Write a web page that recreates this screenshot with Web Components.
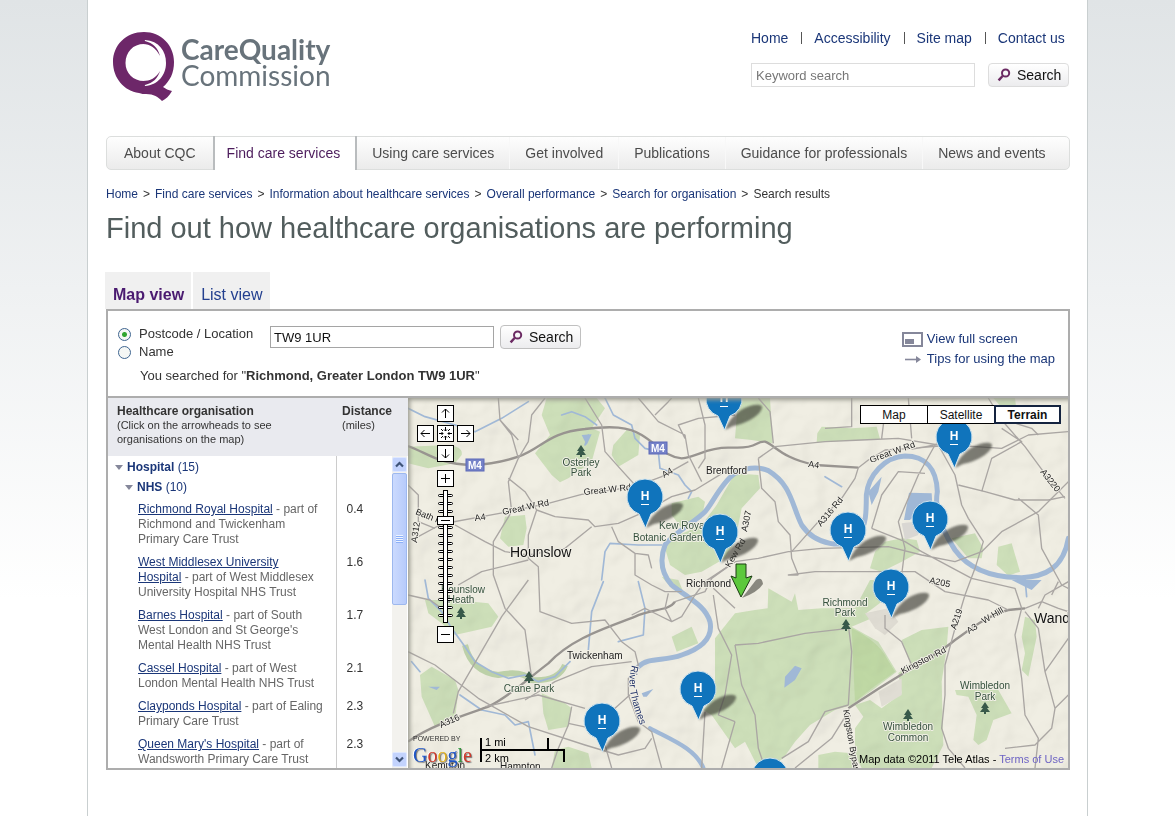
<!DOCTYPE html>
<html lang="en">
<head>
<meta charset="utf-8">
<title>Find out how healthcare organisations are performing - Care Quality Commission</title>
<style>
  html { background: #fff linear-gradient(#e0e4e6, #fff 600px) no-repeat; min-height: 100%; }
  body { margin: 0; font: 13px/16px "Liberation Sans", Arial, sans-serif; color: #333; }
</style>
</head>
<body>
<care-page>
  <site-header></site-header>
  <site-nav></site-nav>
  <bread-crumb></bread-crumb>
  <page-title>Find out how healthcare organisations are performing</page-title>
  <view-tabs></view-tabs>
  <results-panel>
    <location-search slot="search"></location-search>
    <org-list slot="list"></org-list>
    <terrain-map slot="map"></terrain-map>
  </results-panel>
</care-page>

<script>
const define = (name, html, after) => {
  const t = document.createElement('template');
  t.innerHTML = '<style>*{box-sizing:border-box}a{color:#1a3678;text-decoration:none}button,input{font:inherit;margin:0}ul,ol{list-style:none;margin:0;padding:0}</style>' + html;
  customElements.define(name, class extends HTMLElement {
    constructor() {
      super();
      this.attachShadow({ mode: 'open' }).append(t.content.cloneNode(true));
      if (after) after(this.shadowRoot, this);
    }
  });
};

define('search-button', `
<style>
  :host { display: block; }
  button { display: flex; align-items: center; gap: 6px; height: 24px; width: 81px; padding: 0 8px; font-size: 14px; color: #111;
    border: 1px solid var(--edge, #ddd); border-radius: 4px; background: linear-gradient(#fff, #ececee); }
  svg { flex: none; }
</style>
<button type="submit"><svg width="14" height="14" viewBox="0 0 14 14" fill="none" stroke="#6b2a63"><circle cx="8.6" cy="5" r="3.6" stroke-width="2"/><path d="M5.6 8 L1.6 12.4" stroke-width="2.4"/></svg>Search</button>`);

define('care-page', `
<style>
  :host { display: block; max-width: 1001px; min-height: 816px; margin: 0 auto; padding: 0 17px 0 18px; box-sizing: border-box;
    background: #fff; border: solid #c9cfd0; border-width: 0 1px; }
</style>
<slot></slot>`);

define('site-header', `
<style>
  :host { display: flex; justify-content: space-between; padding: 30px 1px 0 6px; min-height: 136px; box-sizing: border-box; }
  nav ul { display: flex; font-size: 14px; line-height: 16px; }
  li + li::before { content: ""; display: inline-block; width: 1px; height: 12px; background: #555; margin: 0 12px 0 13px; vertical-align: -1px; }
  form { display: flex; gap: 13px; margin-top: 17px; }
  input { width: 224px; height: 24px; padding: 0 4px; border: 1px solid #ddd; font-size: 13px; background: #fff; }
  input::placeholder { color: #777; opacity: 1; }
  text { font-family: Lato, sans-serif; font-size: 28px; fill: #68737b; }
</style>
<a href="#" aria-label="Care Quality Commission home"><svg width="222" height="74" viewBox="0 0 222 74">
  <path fill="#6d2769" d="M32 2C49 2 62 15 62 32C62 43 58 51 51 57C54 59 56 60 60 61C57 66 54 69 50 71C46 67 42 64 34 64C31 64 30 64 27 63C12 61 1 48 1 32C1 15 14 2 32 2Z"/>
  <path fill="#fff" d="M32 14C21 14 13.500 22 13.500 33C13.500 43 21 51 32 51L33 56C46 55 54 45 54 33C54 21 47 11 33 10Z"/>
  <path fill="#6d2769" d="M26 11L33 11C41 13 46 18 48 26C44 18 38 14 31 14ZM26 54L33 55C41 53 46 48 48 41C44 48 38 51 31 51Z"/>
  <text x="69" y="30" font-weight="700">CareQuality</text>
  <text x="69" y="56">Commission</text>
</svg></a>
<div>
  <nav aria-label="Site"><ul><li><a href="#">Home</a></li><li><a href="#">Accessibility</a></li><li><a href="#">Site map</a></li><li><a href="#">Contact us</a></li></ul></nav>
  <form onsubmit="return false"><input type="text" aria-label="Keyword search" placeholder="Keyword search"><search-button></search-button></form>
</div>`);

define('site-nav', `
<style>
  :host { display: block; }
  ul { display: flex; height: 34px; border: 1px solid #dcdedd; border-radius: 5px; background: linear-gradient(#fefefe, #ebebeb); font-size: 14px; line-height: 32px; }
  a { display: block; padding: 0 15px; color: #4c4c4c; }
  li + li { border-left: 1px solid #f8f8f8; }
  li:first-child a { padding: 0 17px; }
  li.on { border: solid #b9bcbe; border-width: 0 2px; background: #fff; height: 34px; margin: -1px 0; box-shadow: inset 0 1px #dcdedd; line-height: 34px; }
  li.on + li { border-left: 0; }
  li.on a { padding: 0 15px 0 12px; color: #4c1c5c; }
</style>
<nav aria-label="Main"><ul><li><a href="#">About CQC</a></li><li class="on"><a href="#">Find care services</a></li><li><a href="#">Using care services</a></li><li><a href="#">Get involved</a></li><li><a href="#">Publications</a></li><li><a href="#">Guidance for professionals</a></li><li><a href="#">News and events</a></li></ul></nav>`);

define('bread-crumb', `
<style>
  :host { display: block; padding-top: 16px; font-size: 12px; line-height: 16px; }
  ol { display: flex; flex-wrap: wrap; }
  li + li::before { content: ">"; margin: 0 5px; }
</style>
<nav aria-label="Breadcrumb"><ol><li><a href="#">Home</a></li><li><a href="#">Find care services</a></li><li><a href="#">Information about healthcare services</a></li><li><a href="#">Overall performance</a></li><li><a href="#">Search for organisation</a></li><li>Search results</li></ol></nav>`);

define('page-title', `
<style>
  :host { display: block; }
  h1 { margin: 8px 0 26px; font-size: 29px; line-height: 36px; font-weight: 400; color: #525d5d; }
</style>
<h1><slot></slot></h1>`);

define('view-tabs', `
<style>
  :host { display: block; margin-left: -1px; }
  ul { display: flex; gap: 2px; font-size: 16px; line-height: 45px; height: 37px; }
  a { display: block; height: 37px; padding: 0 7px 0 8px; background: #f0f0f0; color: #24408f; }
  a.on { color: #4a1a70; font-weight: 700; }
</style>
<ul><li><a class="on" href="#">Map view</a></li><li><a href="#">List view</a></li></ul>`);

define('results-panel', `
<style>
  :host { display: block; border: 2px solid #adadad; }
  .split { display: grid; grid-template-columns: 300px minmax(0, 1fr); height: 372px; border-top: 2px solid #adadad; }
</style>
<slot name="search"></slot>
<div class="split"><slot name="list"></slot><slot name="map"></slot></div>`);

define('location-search', `
<style>
  :host { display: flex; justify-content: space-between; height: 85px; padding: 14px 13px 0 10px; box-sizing: border-box; font-size: 13px; }
  form { display: grid; grid-template-columns: 146px 224px 81px; column-gap: 6px; align-content: start; }
  fieldset { border: 0; margin: 0; padding: 0; }
  label { display: flex; align-items: center; gap: 8px; height: 18px; line-height: 18px; white-space: nowrap; }
  [type=radio] { appearance: none; width: 13px; height: 13px; border: 1px solid #3f6590; border-radius: 50%; background: #f5f7f5; }
  [type=radio]:checked { background: radial-gradient(circle, #2fa52f 0 2px, #f5f7f5 3px); }
  [type=text] { height: 22px; align-self: start; margin-top: 1px; padding: 0 3px; border: 1px solid #a5a5a5; color: #111; }
  search-button { --edge: #c0c0c0; }
  p { grid-column: 1 / -1; margin: 7px 0 0; padding-left: 22px; line-height: 16px; }
  li { display: flex; align-items: center; gap: 4px; height: 20px; }
  ul { padding-top: 4px; }
</style>
<form onsubmit="return false">
  <fieldset aria-label="Search by">
    <label><input type="radio" name="by" checked>Postcode / Location</label>
    <label><input type="radio" name="by">Name</label>
  </fieldset>
  <input type="text" aria-label="Postcode or location" value="TW9 1UR">
  <search-button></search-button>
  <p>You searched for "<b>Richmond, Greater London TW9 1UR</b>"</p>
</form>
<ul>
  <li><svg width="21" height="15" viewBox="0 0 21 15"><path d="M1 1H20V14H1Z" fill="#fff" stroke="#85879a" stroke-width="2"/><path d="M3 7H12V12H3Z" fill="#85879a"/></svg><a href="#">View full screen</a></li>
  <li><svg width="21" height="15" viewBox="0 0 21 15"><path d="M3 7.500H16" stroke="#85879a" stroke-width="1.600"/><path d="M14 4L19 7.500L14 11Z" fill="#85879a"/></svg><a href="#">Tips for using the map</a></li>
</ul>`);

define('org-list', `
<style>
  :host { display: block; position: relative; overflow: hidden; min-height: 0; background: #fff; font-size: 12px; line-height: 15px; }
  table { width: 100%; table-layout: fixed; border-collapse: collapse; }
  th { text-align: left; vertical-align: top; font-weight: 400; }
  thead th { height: 58px; padding: 6px 0 0 9px; background: #e9eaef; font-size: 11px; line-height: 14px; }
  thead th + th { padding-left: 6px; }
  thead b { display: block; font-size: 12px; }
  tbody th { border-right: 1px solid #ccc; color: #666; padding: 5px 12px 3px 30px; }
  td { vertical-align: top; padding: 5px 0 3px 10px; color: #333; }
  tbody th a { text-decoration: underline; }
  tbody .g { height: 20px; padding: 0 0 0 7px; }
  tbody .g.n { padding-left: 17px; }
  .g button { display: flex; align-items: center; gap: 4px; border: 0; background: none; padding: 0; height: 20px; color: #1a3678; }
  tr.first .g { padding-top: 1px; height: 21px; }
  .g i { border: solid transparent; border-width: 5px 4px 0; border-top-color: #85879a; }
  .bar { position: absolute; right: 1px; top: 58px; bottom: 0; width: 15px; display: flex; flex-direction: column; gap: 1px; padding: 1px 0; background: #f3f2ee; }
  .bar button { height: 15px; padding: 0; border: 1px solid #dfe8ff; border-radius: 2px; background: #c3d3fd; line-height: 0; }
  .thumb { height: 132px; border: 1px solid #9db8ee; border-radius: 2px; background: linear-gradient(90deg, #cbdafe, #b7cbfb); display: grid; place-items: center; }
  .thumb::before { content: ""; width: 7px; height: 8px; background: repeating-linear-gradient(#eef4ff 0 1px, #8cb0f8 1px 2px); }
  .space { flex: 1; }
</style>
<table>
  <colgroup><col style="width:228px"><col></colgroup>
  <thead><tr><th scope="col"><b>Healthcare organisation</b>(Click on the arrowheads to see<br>organisations on the map)</th><th scope="col"><b>Distance</b>(miles)</th></tr></thead>
  <tbody>
    <tr class="first"><th class="g"><button><i></i><span><b>Hospital</b> (15)</span></button></th><td></td></tr>
    <tr><th class="g n"><button><i></i><span><b>NHS</b> (10)</span></button></th><td></td></tr>
  </tbody>
</table>
<div class="bar"><button aria-label="Scroll up"><svg width="13" height="13"><path d="M3 8.500L6.500 5L10 8.500" fill="none" stroke="#3f5479" stroke-width="2.200"/></svg></button><div class="thumb"></div><div class="space"></div><button aria-label="Scroll down"><svg width="13" height="13"><path d="M3 4.500L6.500 8L10 4.500" fill="none" stroke="#3f5479" stroke-width="2.200"/></svg></button></div>`,
root => {
  const body = root.querySelector('tbody');
  [['Richmond Royal Hospital', 'Richmond and Twickenham Primary Care Trust', '0.4'],
   ['West Middlesex University Hospital', 'West Middlesex University Hospital NHS Trust', '1.6'],
   ['Barnes Hospital', "South West London and St George's Mental Health NHS Trust", '1.7'],
   ['Cassel Hospital', 'West London Mental Health NHS Trust', '2.1'],
   ['Clayponds Hospital', 'Ealing Primary Care Trust', '2.3'],
   ["Queen Mary's Hospital", 'Wandsworth Primary Care Trust', '2.3']].forEach(([name, trust, miles]) => {
    const row = document.createElement('tr');
    row.innerHTML = `<th scope="row"><a href="#">${name}</a> - part of ${trust}</th><td>${miles}</td>`;
    body.append(row);
  });
});

define('map-pin', `
<style>
  :host { position: absolute; width: 80px; height: 56px; margin: -19px 0 0 -19px; pointer-events: none; }
  a { display: block; }
  text { font: 700 12px "Liberation Sans", Arial, sans-serif; fill: #fff; text-anchor: middle; }
</style>
<a href="#" aria-label="Hospital"><svg width="80" height="56" viewBox="0 0 80 56">
  <defs><filter id="b" x="-20%" y="-20%" width="140%" height="140%"><feGaussianBlur stdDeviation=".8"/></filter></defs>
  <path filter="url(#b)" fill="#35342e" opacity=".62" d="M20 50Q24 38 36 30C46 24 58 23 57 28C55 36 40 44 28 46Z"/>
  <path fill="#1074bc" stroke="#d5e6ee" stroke-width="1" d="M19 1A18 18 0 0 1 25 36L19.500 50L13 36A18 18 0 0 1 19 1Z"/>
  <text x="19" y="22">H</text><path d="M15 26.500H23" stroke="#fff"/>
</svg></a>`);

define('terrain-map', `
<style>
  :host { display: block; position: relative; overflow: hidden; min-height: 0; background: #ebe9df; }
  .base { position: absolute; left: 0; top: 0; display: block; width: 660px; height: 370px; }
  .base text { font-family: "Liberation Sans", Arial, sans-serif; font-size: 10px; fill: #222; stroke: #f1efe6; stroke-width: 2px; paint-order: stroke; stroke-linejoin: round; }
  .park { text-anchor: middle; }
  .base .park text { fill: #34503c; }
  .base .left { text-anchor: start; }
  .base .town { font-size: 14px; fill: #111; }
  .base .road { font-size: 9px; }
  .base .shield { fill: #fff; stroke: none; font-weight: 700; }
  .base .river { fill: #1d2f66; font-size: 10px; }
  .edge { position: absolute; inset: 0; box-shadow: inset 3px 3px 4px -1px #9a9a90; pointer-events: none; }
  .pan, .zoom { position: absolute; display: grid; gap: 3px; }
  .pan { left: 9px; top: 7px; grid-template: repeat(3, 17px) / repeat(3, 17px); }
  .zoom { left: 29px; top: 72px; width: 17px; }
  .pan button, .zoom button { width: 17px; height: 17px; padding: 0; border: 1px solid #000; background: #fff; line-height: 0; }
  .pan path, .zoom button path { fill: none; stroke: #000; }
  .u { grid-area: 1 / 2; } .l { grid-area: 2 / 1; } .c { grid-area: 2 / 2; } .r { grid-area: 2 / 3; } .d { grid-area: 3 / 2; }
  .slide { position: relative; height: 133px; }
  .slide input { position: absolute; left: 0; top: 0; width: 17px; height: 133px; opacity: 0; writing-mode: vertical-lr; }
  .types { position: absolute; right: 7px; top: 7px; display: grid; grid-template-columns: repeat(3, 67px); }
  .types button { height: 19px; padding: 0; border: 1px solid #000; background: #fff; color: #111; font-size: 12px; margin-right: -1px; }
  .types .on { font-weight: 700; border: 2px solid #14233f; margin: 0; }
  .powered { position: absolute; left: 5px; bottom: 1px; display: flex; flex-direction: column; line-height: 8px; font-size: 7px; color: #333; }
  .google { font: 20px/24px "Liberation Serif", serif; text-shadow: 1px 1px 1px #777, -1px 0 #fff; }
  .scale { position: absolute; left: 71px; bottom: 5px; width: 90px; height: 26px; }
  .scale text { font: 11px "Liberation Sans", Arial, sans-serif; fill: #000; }
  .legal { position: absolute; right: 4px; bottom: 2px; font-size: 11px; line-height: 14px; color: #000; }
  .legal a { color: #6e64c4; }
</style>
<svg class="base" viewBox="9 9 1980 1110" fill="none" aria-hidden="true">
  <defs><filter id="relief" x="0" y="0" width="100%" height="100%"><feTurbulence type="fractalNoise" baseFrequency=".008" numOctaves="3" seed="8"/><feDiffuseLighting lighting-color="#fff" surfaceScale="24"><feDistantLight azimuth="225" elevation="62"/></feDiffuseLighting></filter></defs>
  <rect x="9" y="9" width="1980" height="1110" fill="#f0eee3"/>
  <g fill="#cddfb9">
    <path d="M425 9L575 9L600 40L560 100L585 110L560 200L490 250L465 262L440 240L390 175L435 120L410 60ZM625 150L665 105L705 120L700 180L640 215L620 180ZM9 155L130 150Q175 155 170 180L150 205L70 220L9 205ZM300 365L360 360L365 400L355 450L310 455L285 430Z"/>
    <path d="M990 235L1060 240L1065 280L1010 340L990 440L960 490L890 530L840 540L795 510L780 460L800 430L890 390L935 330ZM800 325L880 305L900 320L890 370L830 400L800 360Z"/>
    <path d="M1000 9L1095 9L1103 145L1040 135L990 130ZM1250 95L1340 100L1415 95L1425 132L1235 142L1237 115ZM1410 470L1440 440L1490 430L1535 435L1545 470L1490 500L1430 530L1395 520ZM1640 430L1710 415L1735 460L1730 490L1690 490ZM1780 455L1820 445L1845 530L1810 542L1775 510ZM1765 9L1830 9L1835 50L1790 38Z"/>
    <path d="M930 730L990 655L1050 645L1088 640L1090 580L1160 620L1170 595L1180 645L1250 640L1310 640L1370 640L1400 670L1340 695L1420 740L1475 830L1410 880L1340 930L1290 945L1215 990L1170 1040L1135 1090L1090 1119L1060 1119L1020 1040L990 1060L920 960L895 945L930 900Z"/>
    <path d="M1490 735L1550 705L1630 695L1625 760L1610 860L1615 1050L1580 1119L1370 1119L1350 1080L1350 1000L1375 965L1350 930L1395 915L1430 940L1490 895L1480 835L1515 805ZM1650 885L1780 885L1820 955L1765 975L1745 1035L1720 1050L1705 1035L1715 960L1690 905L1655 900ZM1860 665L1890 675L1895 725L1870 845L1850 825L1860 775L1850 725ZM1240 1080L1290 1070L1340 1075L1360 1119L1240 1119ZM1395 555L1440 555L1430 620L1370 665L1350 640Z"/>
    <path d="M60 615L150 615L250 625L280 665L260 695L150 720L110 685L70 655ZM45 840L80 815L150 855L160 885L150 975L90 995L50 905ZM410 895L480 925L500 940L490 995L430 1005L415 955ZM800 725L860 695L880 745L815 770ZM450 1065L490 1055L550 1075L560 1119L440 1119ZM770 545L820 555L835 590L800 580Z"/>
  </g>
  <path d="M1340 700Q1420 740 1445 790L1470 830L1400 880L1350 920Z" fill="#bfd8a4"/>
  <path d="M1380 655L1450 640L1480 680L1440 720L1410 700Z" fill="#dfdcd3"/><path d="M1420 890L1490 850L1490 900L1430 935Z" fill="#e0ddd4"/>
  <rect x="9" y="9" width="1980" height="1110" filter="url(#relief)" opacity=".16" style="mix-blend-mode:multiply"/>
  <g stroke="#bcd0a8" stroke-width="18"><path d="M180 750Q200 830 280 840Q350 825 380 855Q460 860 480 810"/></g>
  <g stroke="#a0b8d6" stroke-linecap="round" stroke-linejoin="round">
    <path stroke-width="15" d="M1990 430C1975 520 1920 545 1850 548C1760 548 1690 520 1650 465C1600 390 1590 330 1597 290C1595 220 1560 183 1500 183C1440 185 1390 240 1384 300C1384 350 1384 390 1360 425C1320 465 1230 450 1190 390C1160 330 1160 270 1090 227C1050 210 1020 222 990 235C950 260 920 330 900 350C870 380 800 420 780 450C765 490 765 530 800 570C850 610 900 630 915 680C925 730 890 760 830 780C780 800 730 785 700 815"/>
    <path stroke-width="13" d="M735 1000C800 1035 870 1060 895 1119"/>
    <path stroke-width="5" d="M600 9L625 60L680 90L690 130L720 160L760 170L765 220L820 240L840 270L860 290L850 310M470 60L500 50L540 65L575 90M540 150L550 120M9 40L60 65L150 90L210 110L290 70L370 20M60 555L70 610L110 650L140 700L180 755L210 800L260 830L310 850L360 840L400 860L450 845L495 800M590 555L600 470L615 445L700 450M770 450L690 450M595 560L560 650L550 765M700 560L720 640L715 720L640 740M165 900L230 945L300 960L330 990L370 980L390 1080M20 800L45 830M1860 550L1865 605M1260 245L1310 275"/>
  </g>
  <g fill="#a0b8d6"><path d="M1512 293L1580 295L1582 330L1550 340L1515 375L1497 375ZM1390 290L1430 245L1420 290L1400 330ZM1140 845L1170 812L1190 820L1170 855L1138 878ZM710 895L745 882L725 905L715 905ZM530 120L560 118L545 150ZM1820 555L1910 555L1880 585ZM70 875L105 875L95 885Z"/></g>
  <path d="M1490 385L1530 380L1540 420L1500 435Z" fill="#d9d7d3"/>
  <g stroke="#989490" stroke-width="7">
    <path d="M9 153C70 175 100 208 200 210C260 208 310 195 340 185C410 160 430 112 540 102C620 92 670 95 710 120C760 150 780 185 830 190C880 185 900 158 970 158L990 158C1060 160 1050 138 1080 140C1110 150 1130 190 1230 210L1360 218"/>
    <path d="M9 1040C80 990 180 960 250 935C320 900 370 850 430 805C500 730 600 700 690 665C740 640 790 650 810 620"/>
    <path d="M1330 940C1390 900 1470 850 1520 820C1590 780 1620 760 1650 735C1700 700 1750 660 1810 645L1860 640"/>
  </g>
  <g stroke="#aaa6a3" stroke-width="4" stroke-linejoin="round">
    <path d="M30 430L110 387L300 352L430 325L530 298L690 275L770 245L850 200M1360 218L1390 195L1440 165L1520 160L1640 150L1790 160L1870 120L1990 110M1360 218L1350 250L1310 310L1240 380L1160 470M1520 162Q1600 152 1640 130"/>
    <path d="M280 9L285 75L320 120L340 190L310 260L320 350L265 440L265 540L300 640L360 705L380 850M285 75L340 135M340 190L370 140L380 60L420 9M310 250L360 290L395 345L450 365L550 375L570 395L640 385L720 350L800 305L870 285L960 230M395 345L370 420L370 490L400 515L405 650L500 685L600 675L650 740L690 770L700 810L670 850L670 900L700 980L740 1010L770 1119M150 390L240 440L300 470L370 480L480 460L560 395M160 570L230 530L370 495M370 555L290 665L160 890L145 955M9 600L75 615L110 640M9 770L90 810L220 910L370 995L540 1050L640 1080L720 1060L740 1030"/>
    <path d="M540 9L590 90L600 170L640 215L690 270M750 60L790 20L800 9M700 9L760 80L840 120L850 180L890 260M990 60L880 70L820 90L840 130M9 270L40 300L40 380L90 400M620 395L640 440L690 475L690 540L740 570L780 590L830 590M690 475L730 480L740 520M790 595L780 640L800 680M680 660L720 640L760 660L800 680L830 665L870 600L900 560L960 520L990 500M500 935L490 990L460 1060L440 1119M360 915L450 860L560 815L680 800M680 895L630 940L600 1050L620 1119M950 1119L990 980"/>
    <path d="M810 620L900 590L920 550L990 500L1060 490L1150 470L1250 460L1450 455L1550 480L1650 500L1730 470L1790 410L1900 350L1990 260M1060 190L1070 280L1110 320L1120 380L1155 420L1160 490L1180 540M1060 190L1110 155L1260 140L1370 135L1480 130L1600 150L1650 240L1670 330L1690 370L1735 440L1710 520L1680 600L1650 700L1620 810L1620 900L1610 1000L1630 1060L1680 1119M1510 9L1520 130M1340 9L1340 95L1260 100M1440 50L1430 130M1590 150L1540 240L1480 380L1500 460L1490 540M1400 400L1500 440L1550 470L1700 550L1830 580L1850 640M1400 400L1430 300L1480 230L1560 235M1180 540L1150 540L1230 530L1400 530L1530 530L1620 590L1750 615L1810 645"/>
    <path d="M1660 270L1740 290L1830 315L1930 315L1980 305M1750 9L1790 75L1860 155L1930 250L1980 310M1790 100L1850 140L1760 190L1730 290M1840 310L1900 360L1910 460L1970 570L1990 580M1800 75L1880 100L1900 120M880 9L900 90L900 190L880 220M1060 9L1095 50L1105 145M1330 690L1340 770L1330 930M990 750L1060 745L1200 715L1330 700M990 750L1010 870L1050 960L1060 1060L1080 1119M1330 930L1260 950L1210 1040L1130 1090M1330 950L1280 1030L1170 1119M1440 660L1440 700L1490 740L1520 810M925 600L940 700L980 780L960 900L940 960L990 980M925 580L990 640M900 950L890 1119M1850 640L1830 720L1850 850L1860 960L1900 1030L1890 1119M1860 650L1900 700L1920 830L1950 940L1940 1000L1890 1050L1800 1060M1900 640L1920 600L1990 560M1860 640L1910 620L1960 640L1990 650M1990 730L1920 830M1990 900L1950 940M1940 600L1960 560M240 935L400 900L540 940M490 985L560 1000"/>
  </g>
</svg>
<svg class="base" viewBox="408 398 660 370" aria-hidden="true">
  <defs><path id="thames" d="M632 665C625 686 633 706 646 740"/>
    <g id="tree" fill="#38594a"><path d="M0-5L4 1L2 1L5 5H1V7H-1V5H-5L-2 1L-4 1Z"/></g></defs>
  <use href="#tree" x="581" y="450"/><use href="#tree" x="461" y="612"/><use href="#tree" x="529" y="676"/><use href="#tree" x="846" y="624"/><use href="#tree" x="908" y="714"/><use href="#tree" x="985" y="707"/>
  <g fill="#7582c8" stroke="#5c69b8"><rect x="466" y="459" width="18" height="12"/><rect x="649" y="442" width="18" height="12"/></g>
  <text class="shield" x="468" y="469">M4</text><text class="shield" x="651" y="452">M4</text>
  <g class="park"><text x="581" y="466">Osterley</text><text x="581" y="476">Park</text><text x="463" y="593">Hounslow</text><text x="461" y="603">Heath</text><text x="529" y="692">Crane Park</text><text x="845" y="606">Richmond</text><text x="845" y="616">Park</text><text x="908" y="730">Wimbledon</text><text x="908" y="741">Common</text><text x="985" y="689">Wimbledon</text><text x="985" y="700">Park</text><text class="left" x="659" y="529">Kew Royal</text><text class="left" x="633" y="541">Botanic Gardens</text></g>
  <text class="town" x="510" y="557">Hounslow</text><text class="town" x="1034" y="623">Wandsworth</text>
  <text x="706" y="474">Brentford</text><text x="686" y="587">Richmond</text><text x="567" y="659">Twickenham</text><text x="425" y="769">Kempton</text><text x="500" y="770">Hampton</text>
  <g>
    <text class="road" transform="translate(475 521) rotate(-8)">A4</text><text class="road" transform="translate(503 515) rotate(-12)">Great W Rd</text><text class="road" transform="translate(584 495) rotate(-6)">Great W Rd</text>
    <text class="road" transform="translate(664 478) rotate(-30)">A4</text><text class="road" transform="translate(415 514) rotate(22)">Bath Rd</text><text class="road" transform="translate(417 543) rotate(-82)">A312</text>
    <text class="road" transform="translate(808 467) rotate(6)">A4</text><text class="road" transform="translate(871 463) rotate(-20)">Great W Rd</text><text class="road" transform="translate(821 527) rotate(-50)">A316 Rd</text>
    <text class="road" transform="translate(747 532) rotate(-78)">A307</text><text class="road" transform="translate(730 568) rotate(-60)">Kew Rd</text><text class="road" transform="translate(1040 472) rotate(52)">A3220</text>
    <text class="road" transform="translate(929 583) rotate(12)">A205</text><text class="road" transform="translate(956 630) rotate(-72)">A219</text><text class="road" transform="translate(969 634) rotate(-33)">A3</text><text class="road" transform="translate(984 624) rotate(-31)">W Hill</text>
    <text class="road" transform="translate(903 674) rotate(-27)">Kingston Rd</text><text class="road" transform="translate(843 710) rotate(80)">Kingston Bypass</text><text class="road" transform="translate(441 728) rotate(-24)">A316</text>
    <text class="river"><textPath href="#thames">River Thames</textPath></text>
  </g>
</svg>
<div class="pins"></div>
<svg class="base" viewBox="408 398 660 370" style="pointer-events:none" role="img" aria-label="Your location"><path d="M742 598L756 580Q762 576 763 584Q758 592 742 598Z" fill="#35342e" opacity=".55"/><path d="M736 564H746V578L752 576L741 597L731 576L736 578Z" fill="#5cc83c" stroke="#1c3c14"/></svg>
<div class="edge"></div>
<div class="pan">
  <button class="u" aria-label="Pan up"><svg width="15" height="15"><path d="M7.500 12V3M4 6.500L7.500 3L11 6.500"/></svg></button>
  <button class="l" aria-label="Pan left"><svg width="15" height="15"><path d="M12 7.500H3M6.500 4L3 7.500L6.500 11"/></svg></button>
  <button class="c" aria-label="Centre map"><svg width="15" height="15"><path d="M7.500 1V5M6 3.500L7.500 5L9 3.500M7.500 14V10M6 11.500L7.500 10L9 11.500M1 7.500H5M3.500 6L5 7.500L3.500 9M14 7.500H10M11.500 6L10 7.500L11.500 9M3 3L5 5M12 3L10 5M3 12L5 10M12 12L10 10"/></svg></button>
  <button class="r" aria-label="Pan right"><svg width="15" height="15"><path d="M3 7.500H12M8.500 4L12 7.500L8.500 11"/></svg></button>
  <button class="d" aria-label="Pan down"><svg width="15" height="15"><path d="M7.500 3V12M4 8.500L7.500 12L11 8.500"/></svg></button>
</div>
<div class="zoom">
  <button aria-label="Zoom in"><svg width="15" height="15"><path d="M3 7.500H12M7.500 3V12"/></svg></button>
  <div class="slide"><svg width="17" height="133" aria-hidden="true"></svg><input type="range" aria-label="Zoom level" min="0" max="17" value="13"></div>
  <button aria-label="Zoom out"><svg width="15" height="15"><path d="M3 7.500H12"/></svg></button>
</div>
<div class="types"><button>Map</button><button>Satellite</button><button class="on">Terrain</button></div>
<div class="powered"><span>POWERED BY</span><span class="google"><span style="color:#1f55c4">G</span><span style="color:#d03a2b">o</span><span style="color:#e0ae1c">o</span><span style="color:#1f55c4">g</span><span style="color:#36963c">l</span><span style="color:#d03a2b">e</span></span></div>
<svg class="scale" viewBox="0 0 90 26"><path d="M2 1V25M1 13H86M69 1V13M85 12V25" stroke="#000" stroke-width="2" fill="none"/><text x="6" y="9">1 mi</text><text x="6" y="25">2 km</text></svg>
<div class="legal">Map data ©2011 Tele Atlas - <a href="#">Terms of Use</a></div>`,
root => {
  const pins = root.querySelector('.pins');
  [[316, 1], [546, 39], [237, 99], [522, 121], [440, 132], [312, 134], [483, 189], [290, 291], [194, 323], [362, 378]].forEach(([x, y]) => {
    const pin = document.createElement('map-pin');
    pin.style.left = x + 'px';
    pin.style.top = y + 'px';
    pins.append(pin);
  });
  let ticks = '';
  for (let y = 4; y < 132; y += 8) ticks += `<rect x="1.500" y="${y + .5}" width="14" height="2" rx="1" fill="#fff" stroke="#000"/>`;
  root.querySelector('.slide svg').innerHTML = ticks +
    '<rect x="6.500" y=".5" width="4" height="132" fill="#fff" stroke="#000"/><rect x=".5" y="26.500" width="16" height="8" fill="#fff" stroke="#000"/><path d="M4 30.500H13" stroke="#000"/>';
});
</script>
</body>
</html>
